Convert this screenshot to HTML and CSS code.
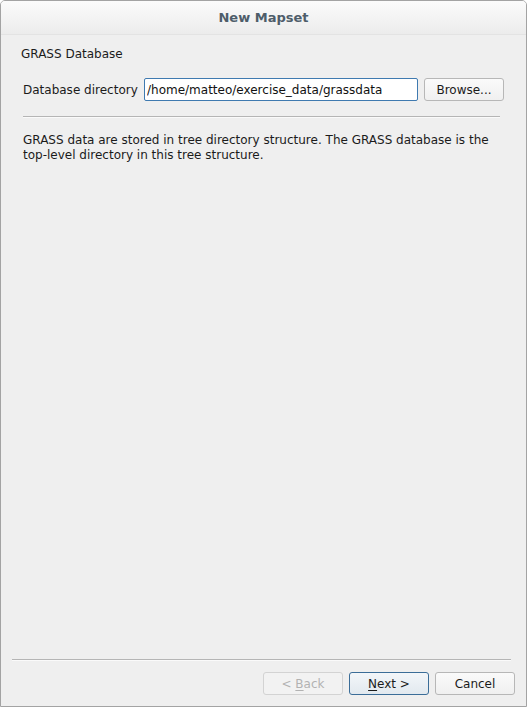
FILE: index.html
```html
<!DOCTYPE html>
<html>
<head>
<meta charset="utf-8">
<link rel="stylesheet" href="styles.css">
</head>
<body>
<div class="window">
  <div class="titlebar">New Mapset</div>
  <div class="content">
    <div class="page">
      <div class="group-title">GRASS Database</div>
      <div class="row">
        <span class="label">Database directory</span>
        <input class="field" type="text" value="/home/matteo/exercise_data/grassdata">
        <button class="btn browse">Browse...</button>
      </div>
      <div class="hr"></div>
      <p class="desc">GRASS data are stored in tree directory structure. The GRASS database is the top-level directory in this tree structure.</p>
    </div>
    <div class="footer">
      <div class="hr bottom"></div>
      <div class="buttons">
        <button class="btn disabled">&lt; <u>B</u>ack</button>
        <button class="btn default"><u>N</u>ext &gt;</button>
        <button class="btn">Cancel</button>
      </div>
    </div>
  </div>
</div>
</body>
</html>
```
FILE: styles.css
```css
html, body {
  margin: 0;
  padding: 0;
  background: #ffffff;
}
body {
  width: 527px;
  height: 707px;
  font-family: "DejaVu Sans", sans-serif;
  font-size: 12px;
  color: #1b1b1b;
}
.window {
  box-sizing: border-box;
  width: 527px;
  height: 707px;
  border: 1px solid #a3a3a3;
  border-radius: 5px 5px 0 0;
  background: #efefef;
  display: flex;
  flex-direction: column;
  overflow: hidden;
}
.titlebar {
  height: 33px;
  flex: none;
  background: linear-gradient(#fbfbfb, #ececec);
  border-bottom: 1px solid #e3e3e3;
  text-align: center;
  line-height: 34px;
  font-weight: bold;
  font-size: 13px;
  color: #4e5d6a;
}
.content {
  flex: 1;
  display: flex;
  flex-direction: column;
  justify-content: space-between;
}
.page {
  padding: 11px 0 0 20px;
}
.group-title {
  line-height: 16px;
}
.row {
  display: flex;
  align-items: center;
  margin-top: 16px;
  padding-left: 2px;
}
.label {
  width: 121px;
}
.field {
  box-sizing: border-box;
  width: 274px;
  height: 23px;
  margin: 0;
  padding: 0 2px;
  border: 1px solid #3f7ab0;
  border-radius: 2px;
  background: #ffffff;
  font-family: "DejaVu Sans", sans-serif;
  font-size: 12px;
  color: #111;
  outline: none;
}
.btn {
  box-sizing: border-box;
  height: 23px;
  margin: 0;
  padding: 0;
  border: 1px solid #b7b7b7;
  border-radius: 3px;
  background: linear-gradient(#fafafa, #f0f0f0);
  font-family: "DejaVu Sans", sans-serif;
  font-size: 12px;
  color: #1b1b1b;
  width: 80px;
}
.browse {
  width: 80px;
  margin-left: 6px;
}
.hr {
  height: 1px;
  background: #b5b5b5;
  border-bottom: 1px solid #fafafa;
}
.page .hr {
  margin: 15px 26px 0 2px;
}
.desc {
  margin: 15px 0 0 2px;
  padding-right: 26px;
  line-height: 15px;
}
.footer {
  padding: 0 11px 11px 11px;
}
.bottom {
  margin: 0 4px 11px 0;
}
.buttons {
  display: flex;
  justify-content: flex-end;
  gap: 6px;
}
.disabled {
  color: #b2b2b2;
  border-color: #d3d3d3;
  background: #f2f2f2;
}
.default {
  border-color: #3b6d98;
  background: linear-gradient(#f3f6f9, #e2e9ef);
}
u {
  text-decoration-thickness: 1px;
  text-underline-offset: 2px;
}
```
